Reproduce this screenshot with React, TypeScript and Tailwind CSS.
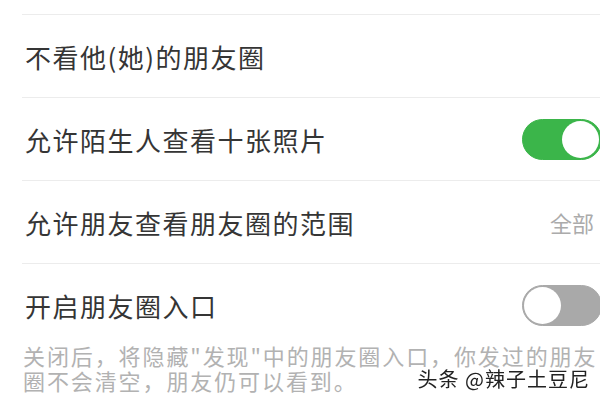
import React from 'react';

const font = { fontFamily: '"Noto Sans CJK SC", "Noto Sans", sans-serif' };

const Toggle: React.FC<{ on: boolean }> = ({ on }) => (
  <div
    className={`relative h-[41px] w-[80px] shrink-0 rounded-full border ${
      on ? 'bg-[#3bb54a] border-[#3bb54a]' : 'bg-[#a9a9a9] border-[#a9a9a9]'
    }`}
  >
    <span
      className={`absolute top-[1px] h-[37px] w-[37px] rounded-full bg-white ${
        on ? 'right-[2px]' : 'left-[1px]'
      }`}
    />
  </div>
);

interface RowProps {
  label: string;
  right?: React.ReactNode;
  last?: boolean;
}

const Row: React.FC<RowProps> = ({ label, right, last }) => (
  <div
    className={`ml-[22px] flex h-[83px] items-center justify-between pl-[3px] ${
      last ? '' : 'border-b border-[#ececec]'
    }`}
  >
    <span className="text-[26px] text-[#353535] tracking-[1.5px]">{label}</span>
    {right && <div className="-mr-[2px] flex items-center">{right}</div>}
  </div>
);

export default function App() {
  return (
    <div className="relative h-[400px] w-[600px] overflow-hidden bg-white" style={font}>
      <div className="ml-[22px] h-[15px] border-b border-[#ececec]" />
      <Row label="不看他(她)的朋友圈" />
      <Row label="允许陌生人查看十张照片" right={<Toggle on />} />
      <Row
        label="允许朋友查看朋友圈的范围"
        right={<span className="w-[52px] whitespace-nowrap text-[22px] text-[#ababab]">全部</span>}
      />
      <Row label="开启朋友圈入口" right={<Toggle on={false} />} last />
      <div className="-mt-[4px] whitespace-nowrap pl-[23px] text-[22px] tracking-[1.9px] text-[#b2b2b2]">
        <div className="h-[25px] leading-[25px]">关闭后，将隐藏"发现"中的朋友圈入口，你发过的朋友</div>
        <div className="h-[25px] leading-[25px]">圈不会清空，朋友仍可以看到。</div>
      </div>
      <span className="absolute bottom-[9px] right-[10px] text-[20px] leading-[24px] tracking-[1px] text-[#222] drop-shadow-[0_0_2px_white]">
        头条 @辣子土豆尼
      </span>
    </div>
  );
}
